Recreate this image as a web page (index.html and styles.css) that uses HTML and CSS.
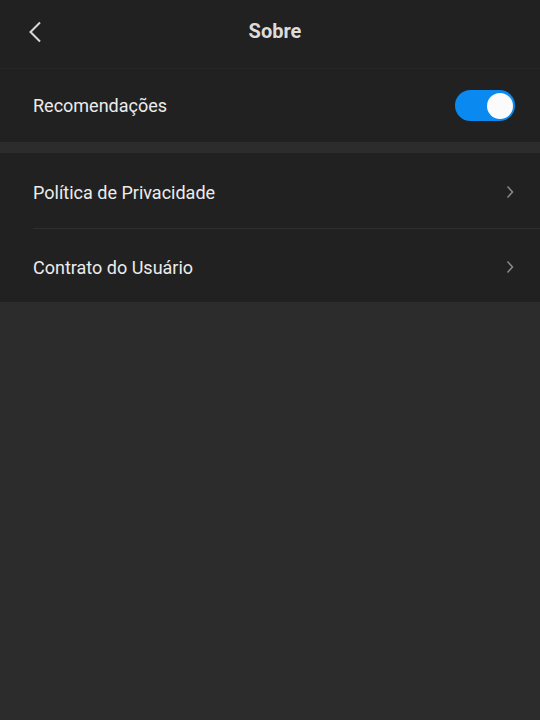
FILE: index.html
```html
<!DOCTYPE html>
<html lang="pt">
<head>
    <meta charset="UTF-8">
    <meta name="viewport" content="width=device-width, initial-scale=1.0">
    <title>Sobre</title>
    <link rel="stylesheet" href="styles.css">
</head>
<body>
    <header class="topbar">
        <button class="back" aria-label="Voltar">
            <svg width="14" height="22" viewBox="0 0 14 22"><path d="M12 1.5 L2.5 11 L12 20.5" fill="none" stroke="#d8d8d8" stroke-width="2"/></svg>
        </button>
        <h1 class="title">Sobre</h1>
    </header>

    <section class="group">
        <div class="row">
            <span class="label">Recomendações</span>
            <div class="switch on"><span class="knob"></span></div>
        </div>
    </section>

    <section class="group">
        <div class="row link">
            <span class="label">Política de Privacidade</span>
            <svg class="arrow" width="8" height="14" viewBox="0 0 8 14"><path d="M1.5 1.5 L6.5 7 L1.5 12.5" fill="none" stroke="#8a8a8a" stroke-width="1.5"/></svg>
        </div>
        <div class="row link">
            <span class="label">Contrato do Usuário</span>
            <svg class="arrow" width="8" height="14" viewBox="0 0 8 14"><path d="M1.5 1.5 L6.5 7 L1.5 12.5" fill="none" stroke="#8a8a8a" stroke-width="1.5"/></svg>
        </div>
    </section>
</body>
</html>
```

FILE: styles.css
```css
body {
    margin: 0;
    background: #2c2c2c;
    font-family: Roboto, "Noto Sans", Arial, sans-serif;
    color: #ececec;
}
.topbar {
    position: relative;
    height: 69px;
    background: #212121;
    border-bottom: 1px solid #262626;
    display: flex;
    align-items: center;
    justify-content: center;
    box-sizing: border-box;
    padding-bottom: 7px;
}
.back {
    position: absolute;
    left: 23px;
    top: 20px;
    padding: 0;
    width: 24px;
    height: 24px;
    display: flex;
    align-items: center;
    justify-content: center;
    background: none;
    border: none;
}
.title {
    margin: 0;
    font-size: 20px;
    font-weight: 700;
    color: #dcdcdc;
    padding-left: 10px;
}
.group {
    background: #212121;
    margin-bottom: 11px;
}
.row {
    height: 73px;
    margin-left: 33px;
    padding-right: 25px;
    display: flex;
    align-items: center;
    justify-content: space-between;
    box-sizing: border-box;
}
.row.link {
    height: 75px;
    padding-right: 26px;
    padding-top: 3px;
}
.row.link + .row.link {
    height: 74px;
    border-top: 1px solid #2f2f2f;
}
.label {
    font-size: 18px;
    color: #ececec;
}
.switch {
    width: 60px;
    height: 31px;
    border-radius: 16px;
    background: #0a8af0;
    display: flex;
    align-items: center;
    justify-content: flex-end;
    padding: 0 2px;
    box-sizing: border-box;
}
.knob {
    width: 26px;
    height: 26px;
    border-radius: 50%;
    background: #fbfbfb;
}
.arrow {
    display: block;
}
```
